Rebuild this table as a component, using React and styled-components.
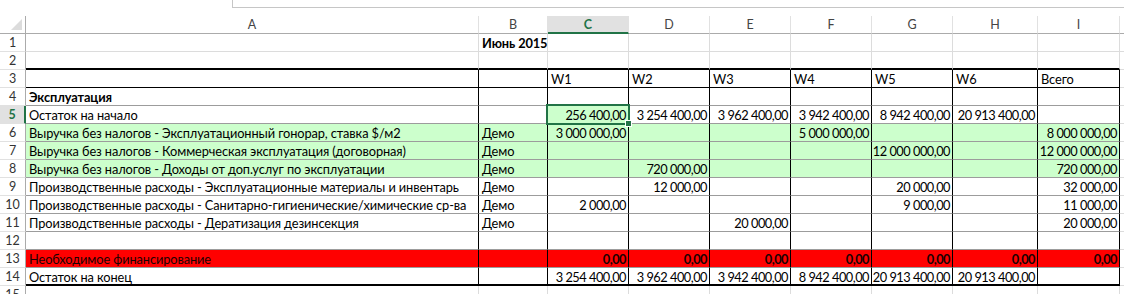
import React from 'react';
import styled, { createGlobalStyle, css } from 'styled-components';

const GlobalStyle = createGlobalStyle`
  html, body { margin: 0; padding: 0; background: #fff; }
  body { font-family: Lato, "Open Sans", sans-serif; overflow: hidden; }
`;

const GREEN = '#217346';
const COL_KEYS = ['A', 'B', 'C', 'D', 'E', 'F', 'G', 'H', 'I', 'J'];
const SELECTED_COL = 'C';
const SELECTED_ROW = 5;

const Page = styled.div`
  width: 1124px;
  height: 294px;
  overflow: hidden;
`;

const FormulaStrip = styled.div`
  height: 16px;
  box-sizing: border-box;
`;

const FormulaBox = styled.div`
  margin-left: 232px;
  height: 8px;
  box-sizing: border-box;
  border-left: 1px solid #c6c6c6;
  border-bottom: 1px solid #c6c6c6;
`;

const Sheet = styled.div`
  display: grid;
  grid-template-columns: 26px 453px 69px 81px 81px 81px 81px 81px 85px 82px 1fr;
  grid-auto-rows: 18px;
`;

const Corner = styled.div`
  position: relative;
  box-sizing: border-box;
  border-right: 1px solid #ababab;
  border-bottom: 1px solid #ababab;
  &::after {
    content: '';
    position: absolute;
    right: 3px;
    bottom: 3px;
    width: 0;
    height: 0;
    border-left: 11px solid transparent;
    border-bottom: 11px solid #dcdcdc;
  }
`;

const ColHeader = styled.div`
  box-sizing: border-box;
  display: flex;
  align-items: center;
  justify-content: center;
  font-size: 12.5px;
  color: #444;
  background: #fff;
  border-right: 1px solid #e1e1e1;
  border-bottom: 1px solid #ababab;
  ${(p) =>
    p.$selected &&
    css`
      background: #e1e1e1;
      color: ${GREEN};
      font-weight: 700;
      border-bottom: 2px solid ${GREEN};
      padding-top: 1px;
    `}
`;

const RowHeader = styled.div`
  box-sizing: border-box;
  display: flex;
  align-items: center;
  justify-content: center;
  font-size: 12.5px;
  color: #333;
  background: #fff;
  border-right: 1px solid #ababab;
  border-bottom: 1px solid #e1e1e1;
  ${(p) =>
    p.$selected &&
    css`
      background: #e1e1e1;
      color: ${GREEN};
      font-weight: 700;
      border-right: 2px solid ${GREEN};
    `}
`;

const FILLS = { green: '#ccffcc', red: '#ff0000' };
const VLINES = { black: '1px solid #000', grid: '1px solid #dcdcdc' };
const HLINES = {
  thick: '2px solid #000',
  black: '1px solid #000',
  table: '1px solid #9c9c9c',
  grid: '1px solid #dcdcdc',
};

const Cell = styled.div`
  position: relative;
  box-sizing: border-box;
  display: flex;
  align-items: center;
  justify-content: ${(p) => (p.$num ? 'flex-end' : 'flex-start')};
  padding: 1px ${(p) => (p.$num ? '2px' : '3px')} 0 3px;
  font-size: 12.8px;
  line-height: 16px;
  letter-spacing: ${(p) => (p.$num ? '-0.5px' : '-0.1px')};
  font-weight: ${(p) => (p.$bold ? 700 : 400)};
  color: ${(p) => (p.$fill === 'red' ? '#1a0000' : '#000')};
  background: ${(p) => (p.$fill ? FILLS[p.$fill] : '#fff')};
  border-right: ${(p) => VLINES[p.$v]};
  border-bottom: ${(p) => HLINES[p.$h]};
  white-space: nowrap;
`;

const Selection = styled.div`
  position: absolute;
  left: -2px;
  top: -2px;
  right: -2px;
  bottom: -2px;
  border: 2px solid ${GREEN};
  pointer-events: none;
  z-index: 2;
`;

const FillHandle = styled.div`
  position: absolute;
  right: -4px;
  bottom: -4px;
  width: 5px;
  height: 5px;
  background: ${GREEN};
  border: 1px solid #fff;
`;

const b = (t) => ({ t, bold: true });
const n = (t) => ({ t, num: true });
const nb = (t) => ({ t, num: true, bold: true });

const ROWS = [
  { r: 1, cells: { B: b('Июнь 2015') } },
  { r: 2, cells: {} },
  { r: 3, cells: { C: 'W1', D: 'W2', E: 'W3', F: 'W4', G: 'W5', H: 'W6', I: 'Всего' } },
  { r: 4, cells: { A: b('Эксплуатация') } },
  {
    r: 5,
    cells: {
      A: 'Остаток на начало',
      C: n('256 400,00'),
      D: n('3 254 400,00'),
      E: n('3 962 400,00'),
      F: n('3 942 400,00'),
      G: n('8 942 400,00'),
      H: n('20 913 400,00'),
    },
  },
  {
    r: 6,
    fill: 'green',
    cells: {
      A: 'Выручка без налогов - Эксплуатационный гонорар, ставка $/м2',
      B: 'Демо',
      C: n('3 000 000,00'),
      F: n('5 000 000,00'),
      I: n('8 000 000,00'),
    },
  },
  {
    r: 7,
    fill: 'green',
    cells: {
      A: 'Выручка без налогов - Коммерческая эксплуатация (договорная)',
      B: 'Демо',
      G: n('12 000 000,00'),
      I: n('12 000 000,00'),
    },
  },
  {
    r: 8,
    fill: 'green',
    cells: {
      A: 'Выручка без налогов - Доходы от доп.услуг по эксплуатации',
      B: 'Демо',
      D: n('720 000,00'),
      I: n('720 000,00'),
    },
  },
  {
    r: 9,
    cells: {
      A: 'Производственные расходы - Эксплуатационные материалы и инвентарь',
      B: 'Демо',
      D: n('12 000,00'),
      G: n('20 000,00'),
      I: n('32 000,00'),
    },
  },
  {
    r: 10,
    cells: {
      A: 'Производственные расходы - Санитарно-гигиенические/химические ср-ва',
      B: 'Демо',
      C: n('2 000,00'),
      G: n('9 000,00'),
      I: n('11 000,00'),
    },
  },
  {
    r: 11,
    cells: {
      A: 'Производственные расходы - Дератизация дезинсекция',
      B: 'Демо',
      E: n('20 000,00'),
      I: n('20 000,00'),
    },
  },
  { r: 12, cells: {} },
  {
    r: 13,
    fill: 'red',
    cells: {
      A: 'Необходимое финансирование',
      C: nb('0,00'),
      D: nb('0,00'),
      E: nb('0,00'),
      F: nb('0,00'),
      G: nb('0,00'),
      H: nb('0,00'),
      I: nb('0,00'),
    },
  },
  {
    r: 14,
    cells: {
      A: 'Остаток на конец',
      C: n('3 254 400,00'),
      D: n('3 962 400,00'),
      E: n('3 942 400,00'),
      F: n('8 942 400,00'),
      G: n('20 913 400,00'),
      H: n('20 913 400,00'),
    },
  },
  { r: 15, cells: {} },
];

function lines(r, ci) {
  const inTable = ci <= 8;
  const v = inTable && r >= 3 && r <= 14 ? 'black' : 'grid';
  let h = 'grid';
  if (inTable) {
    if (r === 2 || r === 14) h = 'thick';
    else if (r === 3) h = 'black';
    else if (r >= 4 && r <= 13) h = 'table';
  }
  return { v, h };
}

export default function App() {
  return (
    <Page>
      <GlobalStyle />
      <FormulaStrip>
        <FormulaBox />
      </FormulaStrip>
      <Sheet>
        <Corner />
        {COL_KEYS.map((k) => (
          <ColHeader key={k} $selected={k === SELECTED_COL}>
            {k === 'J' ? '' : k}
          </ColHeader>
        ))}
        {ROWS.map((row) => (
          <React.Fragment key={row.r}>
            <RowHeader $selected={row.r === SELECTED_ROW}>{row.r}</RowHeader>
            {COL_KEYS.map((k, ci) => {
              const raw = row.cells[k];
              const cell = typeof raw === 'string' ? { t: raw } : raw || {};
              const { v, h } = lines(row.r, ci);
              const isSel = row.r === SELECTED_ROW && k === SELECTED_COL;
              const fill = isSel ? 'green' : ci <= 8 ? row.fill : undefined;
              return (
                <Cell key={k} $num={cell.num} $bold={cell.bold} $fill={fill} $v={v} $h={h}>
                  {cell.t}
                  {isSel && (
                    <Selection>
                      <FillHandle />
                    </Selection>
                  )}
                </Cell>
              );
            })}
          </React.Fragment>
        ))}
      </Sheet>
    </Page>
  );
}
